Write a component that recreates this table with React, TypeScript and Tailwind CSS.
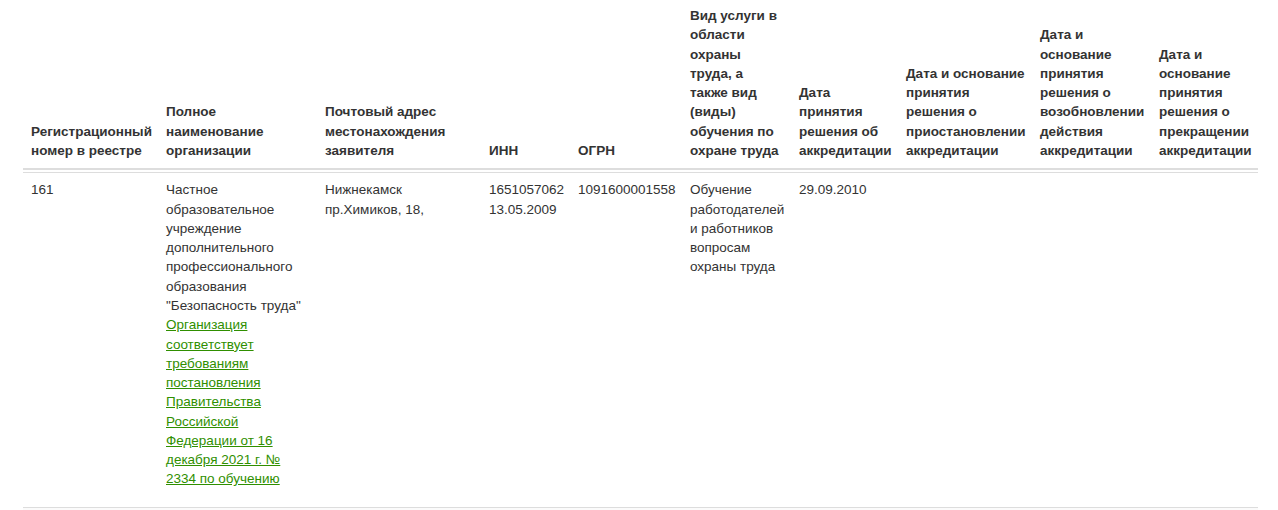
import React from "react";

const widths = [135, 159, 164, 89, 112, 109, 107, 134, 119, 107];

const headers = [
  "Регистрационный номер в реестре",
  "Полное наименование организации",
  "Почтовый адрес местонахождения заявителя",
  "ИНН",
  "ОГРН",
  "Вид услуги в области охраны труда, а также вид (виды) обучения по охране труда",
  "Дата принятия решения об аккредитации",
  "Дата и основание принятия решения о приостановлении аккредитации",
  "Дата и основание принятия решения о возобновлении действия аккредитации",
  "Дата и основание принятия решения о прекращении аккредитации",
];

export default function App() {
  const td = "border-t border-[#dddddd] px-[8px] pt-[7px] pb-[8px] align-top text-left font-normal";
  return (
    <div
      className="w-[1278px] h-[510px] overflow-hidden bg-white text-[#333333] text-[13.5px] leading-[1.42857]"
      style={{ fontFamily: '"Liberation Sans", Arial, sans-serif' }}
    >
      <table className="ml-[23px] table-fixed border-separate border-spacing-0 w-[1235px]">
        <colgroup>
          {widths.map((w, i) => (
            <col key={i} style={{ width: w }} />
          ))}
        </colgroup>
        <thead>
          <tr>
            {headers.map((h, i) => (
              <th
                key={i}
                className={
                  i === 7
                    ? "border-b-2 border-[#dddddd] pl-[8px] pr-[3px] pt-[6px] pb-[8px] align-bottom text-left font-bold"
                    : "border-b-2 border-[#dddddd] px-[8px] pt-[6px] pb-[8px] align-bottom text-left font-bold"
                }
              >
                {h}
              </th>
            ))}
          </tr>
        </thead>
        <tbody>
          <tr>
            <td colSpan={10} className="h-[2px] p-0"></td>
          </tr>
          <tr>
            <td className={td}>161</td>
            <td className={td}>
              <p className="mb-[10px]">
                Частное образовательное учреждение дополнительного профессионального образования "Безопасность труда"
                <br />
                <a href="#" className="text-[#2f8f00] underline">
                  Организация соответствует требованиям постановления Правительства Российской Федерации от 16 декабря 2021 г. № 2334 по обучению
                </a>
              </p>
            </td>
            <td className={td}>Нижнекамск пр.Химиков, 18,</td>
            <td className={td}>
              1651057062
              <br />
              13.05.2009
            </td>
            <td className={td}>1091600001558</td>
            <td className={td}>Обучение работодателей и работников вопросам охраны труда</td>
            <td className={td}>29.09.2010</td>
            <td className={td}></td>
            <td className={td}></td>
            <td className={td}></td>
          </tr>
          <tr>
            <td colSpan={10} className="border-t border-[#dddddd] h-[6px] p-0 bg-[#fbfbfb]"></td>
          </tr>
        </tbody>
      </table>
    </div>
  );
}
